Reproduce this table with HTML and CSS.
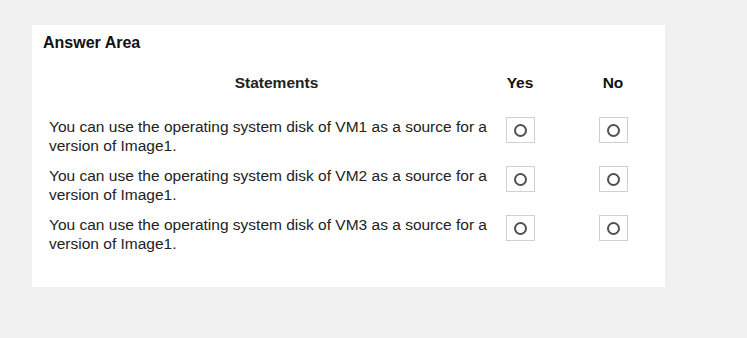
FILE: index.html
```html
<!DOCTYPE html>
<html lang="en">

<head>
    <meta charset="UTF-8">
    <title>Answer Area</title>
    <link rel="stylesheet" href="styles.css">
</head>

<body>
    <div class="panel">
        <h2 class="title">Answer Area</h2>

        <div class="row head">
            <div class="stmt">Statements</div>
            <div class="opt">Yes</div>
            <div class="opt no">No</div>
        </div>

        <div class="row">
            <div class="stmt">You can use the operating system disk of VM1 as a source for a version of Image1.</div>
            <div class="opt"><span class="box"><span class="dot"></span></span></div>
            <div class="opt no"><span class="box"><span class="dot"></span></span></div>
        </div>

        <div class="row">
            <div class="stmt">You can use the operating system disk of VM2 as a source for a version of Image1.</div>
            <div class="opt"><span class="box"><span class="dot"></span></span></div>
            <div class="opt no"><span class="box"><span class="dot"></span></span></div>
        </div>

        <div class="row">
            <div class="stmt">You can use the operating system disk of VM3 as a source for a version of Image1.</div>
            <div class="opt"><span class="box"><span class="dot"></span></span></div>
            <div class="opt no"><span class="box"><span class="dot"></span></span></div>
        </div>
    </div>
</body>

</html>
```

FILE: styles.css
```css
body {
    margin: 0;
    background-color: #f0f0f0;
    font-family: 'Liberation Sans', Arial, sans-serif;
    color: #1a1a1a;
}

.panel {
    width: 622px;
    height: 253px;
    margin: 25px 0 0 32px;
    padding: 9px 0 0 11px;
    background-color: #ffffff;
}

.title {
    margin: 0;
    font-size: 16px;
    line-height: 18px;
    font-weight: bold;
    color: #111;
}

.row {
    display: flex;
    align-items: flex-start;
    margin-top: 11px;
    padding-left: 6px;
    font-size: 15.5px;
    line-height: 19px;
}

.head {
    margin-top: 22px;
    margin-bottom: 25px;
    line-height: 18px;
    font-weight: bold;
    color: #111;
}

.head .stmt {
    text-align: center;
    padding-left: 9px;
    box-sizing: border-box;
}

.stmt {
    width: 446px;
    color: #222;
}

.opt {
    width: 50px;
    display: flex;
    justify-content: center;
}

.opt.no {
    margin-left: 43px;
}

.box {
    width: 27px;
    height: 24px;
    border: 1px solid #d0d0d0;
    display: flex;
    align-items: center;
    justify-content: center;
}

.dot {
    width: 9px;
    height: 9px;
    border: 2px solid #505050;
    border-radius: 50%;
}
```
